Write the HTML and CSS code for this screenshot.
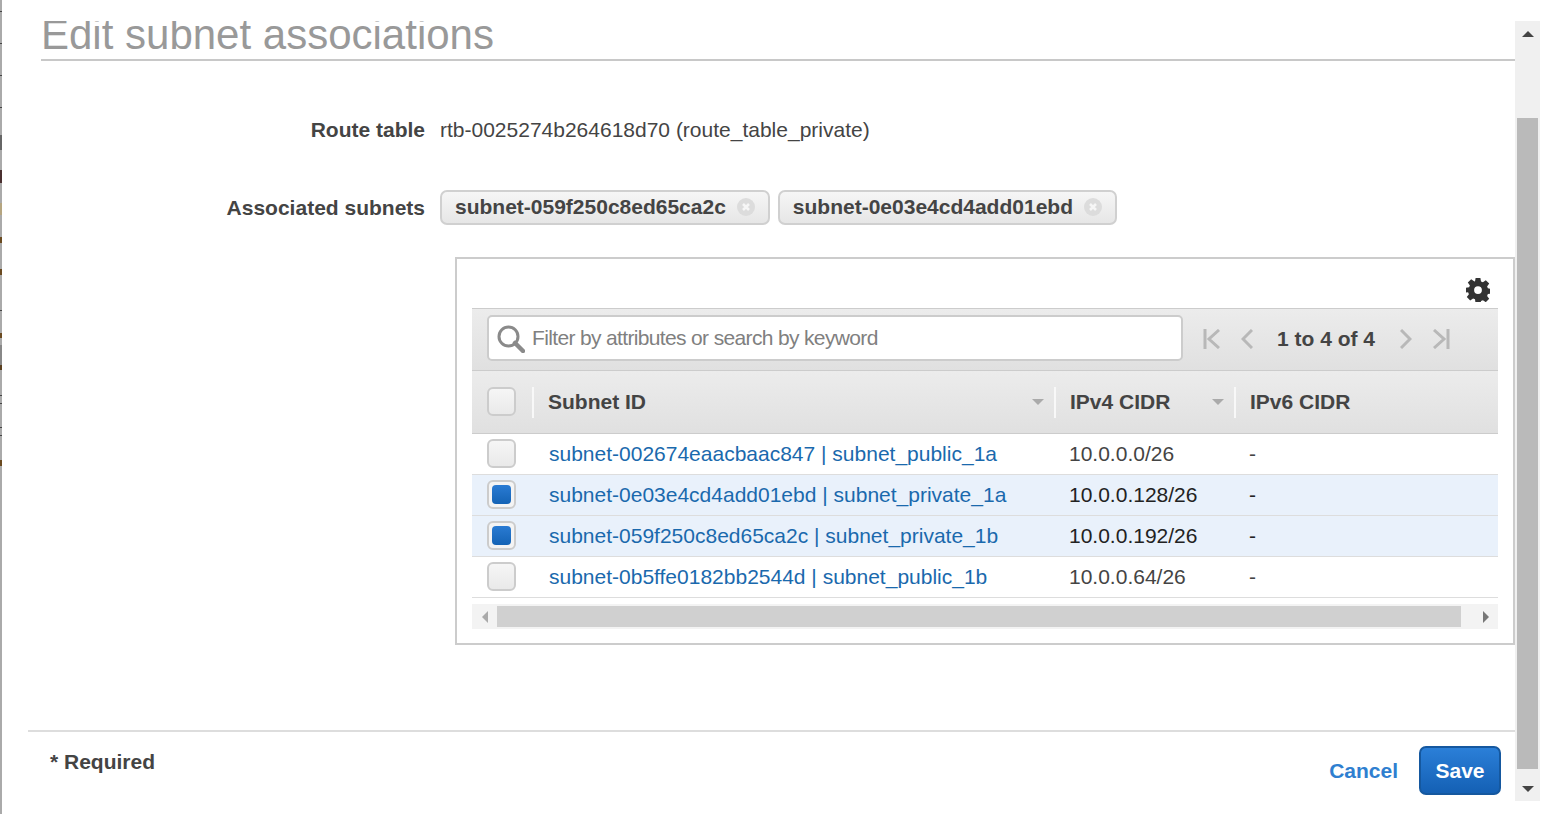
FILE: index.html
```html
<!DOCTYPE html>
<html lang="en">
<head>
  <meta charset="UTF-8">
  <title>Edit subnet associations</title>
  <link rel="stylesheet" href="styles.css">
</head>
<body>
  <div class="page">
    <div class="dialog">
      <div class="dialog-body">
        <h1>Edit subnet associations</h1>

        <div class="field route-field">
          <div class="field-label">Route table</div>
          <div class="field-value">rtb-0025274b264618d70 (route_table_private)</div>
        </div>

        <div class="field chips-field">
          <div class="field-label">Associated subnets</div>
          <div class="chips">
            <span class="chip">subnet-059f250c8ed65ca2c
              <svg class="chip-x" viewBox="0 0 18 18"><circle cx="9" cy="9" r="9" fill="#dcdcdc"/><path d="M6 6l6 6M12 6l-6 6" stroke="#f6f6f6" stroke-width="2.500"/></svg>
            </span>
            <span class="chip">subnet-0e03e4cd4add01ebd
              <svg class="chip-x" viewBox="0 0 18 18"><circle cx="9" cy="9" r="9" fill="#dcdcdc"/><path d="M6 6l6 6M12 6l-6 6" stroke="#f6f6f6" stroke-width="2.500"/></svg>
            </span>
          </div>
        </div>

        <div class="card">
          <div class="card-top">
            <svg class="gear" viewBox="0 0 24 24"><path fill="#333" fill-rule="evenodd" d="M9.6 0h4.8l.6 3.4 1.9.8L19.800 2.200l3.400 3.400-2.100 2.800.8 1.900 3.100.5v4.800l-3.100.5-.8 1.900 2.100 2.800-3.400 3.400-2.900-2-1.900.8-.6 2.800H9.600L9 21.200l-1.900-.8-2.900 2-3.400-3.400 2.100-2.800-.8-1.900L0 14.600V9.800l3.100-.5.8-1.900-2.100-2.800 3.400-3.400 2.900 2L9 3.400zM12 8.200a3.900 3.900 0 1 0 0 7.800 3.900 3.900 0 0 0 0-7.800z"/></svg>
          </div>

          <div class="toolbar">
            <div class="search">
              <svg class="search-icon" viewBox="0 0 28 28"><circle cx="11.500" cy="11.500" r="9.500" fill="none" stroke="#8a8a8a" stroke-width="3"/><path d="M18 18l8 8" stroke="#8a8a8a" stroke-width="4.500" stroke-linecap="round"/></svg>
              <span class="search-text">Filter by attributes or search by keyword</span>
            </div>
            <div class="pager">
              <svg class="pager-icon first" viewBox="0 0 18 20"><path d="M2 0v20M16 1L6 10l10 9" fill="none" stroke="#b8b8b8" stroke-width="3"/></svg>
              <svg class="pager-icon prev" viewBox="0 0 12 20"><path d="M11 1L2 10l9 9" fill="none" stroke="#b8b8b8" stroke-width="3"/></svg>
              <span class="pager-text">1 to 4 of 4</span>
              <svg class="pager-icon next" viewBox="0 0 12 20"><path d="M1 1l9 9-9 9" fill="none" stroke="#b8b8b8" stroke-width="3"/></svg>
              <svg class="pager-icon last" viewBox="0 0 18 20"><path d="M16 0v20M2 1l10 9-10 9" fill="none" stroke="#b8b8b8" stroke-width="3"/></svg>
            </div>
          </div>

          <table class="subnets">
            <colgroup>
              <col class="col-check">
              <col class="col-id">
              <col class="col-v4">
              <col>
            </colgroup>
            <thead>
              <tr>
                <th><div class="th-in check-cell"><span class="box"></span></div></th>
                <th><div class="th-in">Subnet ID<span class="sort"></span></div></th>
                <th><div class="th-in">IPv4 CIDR<span class="sort"></span></div></th>
                <th><div class="th-in">IPv6 CIDR</div></th>
              </tr>
            </thead>
            <tbody>
              <tr>
                <td><div class="check-cell"><span class="box"></span></div></td>
                <td class="id-cell"><a href="#">subnet-002674eaacbaac847 | subnet_public_1a</a></td>
                <td>10.0.0.0/26</td>
                <td>-</td>
              </tr>
              <tr class="selected">
                <td><div class="check-cell"><span class="box checked"></span></div></td>
                <td class="id-cell"><a href="#">subnet-0e03e4cd4add01ebd | subnet_private_1a</a></td>
                <td>10.0.0.128/26</td>
                <td>-</td>
              </tr>
              <tr class="selected">
                <td><div class="check-cell"><span class="box checked"></span></div></td>
                <td class="id-cell"><a href="#">subnet-059f250c8ed65ca2c | subnet_private_1b</a></td>
                <td>10.0.0.192/26</td>
                <td>-</td>
              </tr>
              <tr>
                <td><div class="check-cell"><span class="box"></span></div></td>
                <td class="id-cell"><a href="#">subnet-0b5ffe0182bb2544d | subnet_public_1b</a></td>
                <td>10.0.0.64/26</td>
                <td>-</td>
              </tr>
            </tbody>
          </table>

          <div class="hscroll">
            <span class="hscroll-arrow left"></span>
            <div class="hscroll-thumb"></div>
            <span class="hscroll-arrow right"></span>
          </div>
        </div>

        <div class="footer">
          <div class="required">* Required</div>
          <div class="actions">
            <a class="cancel" href="#">Cancel</a>
            <button class="save">Save</button>
          </div>
        </div>
      </div>

      <div class="vscroll">
        <span class="vscroll-arrow up"></span>
        <div class="vscroll-track"><div class="vscroll-thumb"></div></div>
        <span class="vscroll-arrow down"></span>
      </div>
    </div>
  </div>
</body>
</html>
```

FILE: styles.css
```css
/* Reset */
body, h1 {
    margin: 0;
    padding: 0;
}

body {
    font-family: "Liberation Sans", Arial, sans-serif;
    background: #fff;
    color: #444;
    overflow: hidden;
}

/* The left stripe is the page behind the dialog showing through */
.page {
    width: 1542px;
    height: 814px;
    box-sizing: border-box;
    padding: 21px 0 0 2px;
    background: linear-gradient(#aaa 11px, #444 11px 12px, #aaa 12px 43px, #444 43px 44px, #aaa 44px 75px,
        #444 75px 76px, #aaa 76px 107px, #444 107px 108px, #aaa 108px 135px, #666 135px 150px, #aaa 150px 170px,
        #4a3030 170px 183px, #aaa 183px 203px, #b5a580 203px 215px, #aaa 215px 237px, #6a4a20 237px 243px,
        #aaa 243px 269px, #6a4a20 269px 275px, #aaa 275px 310px, #444 310px 311px, #aaa 311px 333px,
        #6a4a20 333px 338px, #aaa 338px 345px, #888 345px 365px, #5a4020 365px 370px, #aaa 370px 395px,
        #444 395px 396px, #aaa 396px 403px, #444 403px 404px, #aaa 404px 427px, #444 427px 428px,
        #aaa 428px 435px, #444 435px 436px, #aaa 436px 460px, #6a4a20 460px 466px, #aaa 466px) no-repeat 0 0 / 2px 100%;
}

.dialog {
    display: flex;
    height: 780px;
}

.dialog-body {
    width: 1513px;
    overflow: hidden;
}

/* Heading, clipped at the top by the scrolled dialog */
h1 {
    margin-left: 39px;
    height: 38px;
    line-height: 27px;
    font-size: 42px;
    font-weight: 400;
    color: #999;
    border-bottom: 2px solid #c8c8c8;
}

/* Label + value rows */
.field {
    display: grid;
    grid-template-columns: 384px 1fr;
    column-gap: 15px;
    margin-left: 39px;
    align-items: center;
    font-size: 21px;
}

.route-field {
    margin-top: 53px;
    height: 32px;
}

.chips-field {
    margin-top: 43px;
    height: 36px;
}

.chips-field .field-label {
    padding-top: 2px;
}

.field-label {
    text-align: right;
    font-weight: 700;
    color: #444;
}

.field-value {
    color: #444;
}

.chips {
    display: flex;
    gap: 8px;
}

.chip {
    display: flex;
    align-items: center;
    gap: 11px;
    height: 35px;
    box-sizing: border-box;
    padding: 0 13px 0 13px;
    border: 2px solid #d0d0d0;
    border-radius: 7px;
    background: linear-gradient(#f6f6f6, #e6e6e6);
    font-weight: 700;
    font-size: 21px;
    color: #444;
}

.chip-x {
    width: 18px;
    height: 18px;
}

/* Table card */
.card {
    margin: 32px 0 0 453px;
    width: 1060px;
    height: 388px;
    box-sizing: border-box;
    border: 2px solid #ccc;
    padding: 0 15px 0 15px;
}

.card-top {
    height: 49px;
    display: flex;
    justify-content: flex-end;
    align-items: flex-end;
    padding-right: 8px;
}

.gear {
    width: 24px;
    height: 24px;
    margin-bottom: 6px;
}

.toolbar {
    display: flex;
    align-items: center;
    height: 61px;
    padding-left: 15px;
    border-top: 1px solid #ccc;
    border-bottom: 1px solid #ccc;
    background: linear-gradient(#ececec, #e0e0e0);
}

.search {
    display: flex;
    align-items: center;
    width: 696px;
    height: 46px;
    margin-bottom: 3px;
    box-sizing: border-box;
    border: 2px solid #ccc;
    border-radius: 5px;
    background: #fff;
    padding-left: 8px;
}

.search-icon {
    width: 28px;
    height: 28px;
    margin-right: 7px;
    margin-top: 2px;
}

.search-text {
    font-size: 21px;
    color: #808080;
    letter-spacing: -0.65px;
}

.pager {
    display: flex;
    align-items: center;
    margin-left: 20px;
    margin-bottom: 2px;
    font-size: 21px;
    font-weight: 700;
    color: #444;
}

.pager-icon {
    height: 20px;
}

.first { width: 18px; }
.prev { width: 12px; margin-left: 20px; }
.pager-text { margin: 0 25px 0 24px; }
.next { width: 12px; }
.last { width: 18px; margin-left: 20px; }

/* Subnets table */
.subnets {
    width: 1026px;
    table-layout: fixed;
    border-collapse: collapse;
    font-size: 21px;
}

.col-check { width: 60px; }
.col-id { width: 522px; }
.col-v4 { width: 180px; }

.subnets th {
    height: 62px;
    padding: 0;
    text-align: left;
    font-weight: 700;
    color: #444;
    background: linear-gradient(#ececec, #e0e0e0);
    border-bottom: 1px solid #ccc;
}

.th-in {
    display: flex;
    align-items: center;
    justify-content: space-between;
    height: 31px;
    padding: 0 10px 0 14px;
    border-left: 2px solid #f8f8f8;
}

.th-in.check-cell {
    border-left: none;
    height: 41px;
    padding: 0 0 2px 15px;
}

.sort {
    width: 0;
    height: 0;
    border-left: 6px solid transparent;
    border-right: 6px solid transparent;
    border-top: 6px solid #aaa;
}

.subnets td {
    height: 40px;
    padding: 0 0 0 15px;
    border-bottom: 1px solid #ddd;
    color: #444;
}

.subnets td:first-child {
    padding: 0;
}

.subnets td.id-cell {
    padding-left: 17px;
}

.subnets a {
    color: #1a69ad;
    text-decoration: none;
}

.subnets .selected td {
    background: #e9f1fb;
    color: #222;
}

.check-cell {
    display: flex;
    align-items: center;
    padding: 0 0 2px 15px;
}

.box {
    display: flex;
    align-items: center;
    justify-content: center;
    width: 29px;
    height: 29px;
    box-sizing: border-box;
    border: 2px solid #ccc;
    border-radius: 6px;
    background: linear-gradient(#f6f6f6, #e9e9e9);
}

.box.checked {
    background: #f4f4f4;
}

.box.checked::after {
    content: "";
    width: 19px;
    height: 19px;
    border-radius: 4px;
    background: linear-gradient(#2a7bd3, #1463b5);
}

/* Fake horizontal scrollbar */
.hscroll {
    display: flex;
    align-items: center;
    margin-top: 6px;
    height: 25px;
    background: #f3f3f3;
}

.hscroll-thumb {
    flex: 1;
    height: 21px;
    background: #d0d0d0;
}

.hscroll-arrow {
    display: flex;
    justify-content: center;
    width: 25px;
}

.hscroll-arrow.left::before {
    content: "";
    border-top: 6px solid transparent;
    border-bottom: 6px solid transparent;
    border-right: 6px solid #aaa;
}

.hscroll-arrow.right {
    width: 37px;
    box-sizing: border-box;
    padding-left: 12px;
}

.hscroll-arrow.right::before {
    content: "";
    border-top: 6px solid transparent;
    border-bottom: 6px solid transparent;
    border-left: 6px solid #777;
}

/* Footer */
.footer {
    display: flex;
    justify-content: space-between;
    margin: 85px 0 0 26px;
    height: 70px;
    border-top: 2px solid #ddd;
}

.required {
    margin: 18px 0 0 22px;
    font-size: 21px;
    font-weight: 700;
    color: #444;
}

.actions {
    display: flex;
    align-items: center;
    gap: 21px;
    padding: 14px 14px 0 0;
    align-self: flex-start;
}

.cancel {
    font-size: 21px;
    font-weight: 700;
    color: #2f7fd0;
    text-decoration: none;
}

.save {
    width: 82px;
    height: 49px;
    border: 2px solid #15589f;
    border-radius: 7px;
    background: linear-gradient(#2b7fd8, #1460b4);
    color: #fff;
    font-family: inherit;
    font-size: 21px;
    font-weight: 700;
}

/* Window scrollbar */
.vscroll {
    width: 25px;
    height: 780px;
    display: flex;
    flex-direction: column;
    background: #f0f0f0;
}

.vscroll-track {
    flex: 1;
    padding: 0 2px;
}

.vscroll-thumb {
    margin-top: 72px;
    height: 651px;
    background: #bababa;
}

.vscroll-arrow {
    display: flex;
    align-items: center;
    justify-content: center;
    height: 25px;
}

.vscroll-arrow.up::before {
    content: "";
    border-left: 6px solid transparent;
    border-right: 6px solid transparent;
    border-bottom: 6px solid #444;
}

.vscroll-arrow.down::before {
    content: "";
    border-left: 6px solid transparent;
    border-right: 6px solid transparent;
    border-top: 6px solid #444;
}
```
